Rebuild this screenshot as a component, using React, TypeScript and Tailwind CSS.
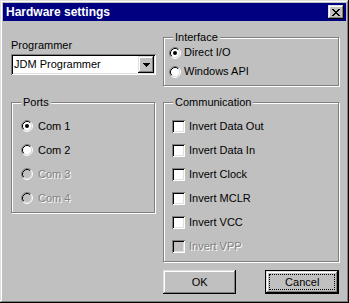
import React from "react";

const raised =
  "shadow-[inset_-1px_-1px_#000,inset_1px_1px_#dfdfdf,inset_-2px_-2px_#808080,inset_2px_2px_#fff]";
const sunken =
  "shadow-[inset_1px_1px_#808080,inset_-1px_-1px_#fff,inset_2px_2px_#000,inset_-2px_-2px_#dfdfdf]";

const Radio = ({ checked, disabled }: { checked?: boolean; disabled?: boolean }) => (
  <svg width="12" height="12" viewBox="0 0 12 12" className="shrink-0">
    <circle cx="6" cy="6" r="4.5" fill={disabled ? "#c0c0c0" : "#fff"} />
    <path d="M2.11 9.89A5.5 5.5 0 0 1 9.89 2.11" fill="none" stroke="#808080" />
    <path d="M9.89 2.11A5.5 5.5 0 0 1 2.11 9.89" fill="none" stroke="#fff" />
    <path d="M2.82 9.18A4.5 4.5 0 0 1 9.18 2.82" fill="none" stroke="#000" />
    <path d="M9.18 2.82A4.5 4.5 0 0 1 2.82 9.18" fill="none" stroke="#dfdfdf" />
    {checked && <circle cx="6" cy="6" r="2" fill={disabled ? "#808080" : "#000"} />}
  </svg>
);

const Check = ({ disabled }: { disabled?: boolean }) => (
  <div className={`w-[13px] h-[13px] shrink-0 ${sunken} ${disabled ? "bg-[#c0c0c0]" : "bg-white"}`} />
);

const Group = ({
  title,
  className,
  children,
}: {
  title: string;
  className: string;
  children: React.ReactNode;
}) => (
  <div
    className={`relative border border-[#808080] shadow-[inset_1px_1px_#fff,1px_1px_#fff] ${className}`}
  >
    <span className="absolute top-[-7px] left-[9px] px-[2px] bg-[#c0c0c0]">{title}</span>
    {children}
  </div>
);

const dim = "text-[#808080] [text-shadow:1px_1px_0_#fff]";

export default function App() {
  return (
    <div
      className={`w-[349px] h-[303px] bg-[#c0c0c0] p-[3px] ${raised} font-['Liberation_Sans',Arial,sans-serif] text-[11px] leading-[13px] text-black`}
    >
      <div className="h-[18px] bg-[#000080] flex items-center justify-between pl-[3px] pr-[2px]">
        <span className="text-white font-bold text-[12px]">Hardware settings</span>
        <div className={`w-[16px] h-[14px] bg-[#c0c0c0] ${raised} flex items-center justify-center`}>
          <svg width="8" height="7" viewBox="0 0 8 7" shapeRendering="crispEdges">
            <path
              d="M0 0h2v1h-2zM6 0h2v1h-2zM1 1h2v1h-2zM5 1h2v1h-2zM2 2h4v1h-4zM3 3h2v1h-2zM2 4h4v1h-4zM1 5h2v1h-2zM5 5h2v1h-2zM0 6h2v1h-2zM6 6h2v1h-2z"
              fill="#000"
            />
          </svg>
        </div>
      </div>

      <div className="pl-[8px] pt-[16px] flex gap-[7px]">
        <div className="w-[145px] flex flex-col">
          <div className="mt-[2px]">Programmer</div>
          <div className={`mt-[2px] h-[21px] bg-white ${sunken} flex items-center pl-[3px] pr-[2px]`}>
            <span>JDM Programmer</span>
            <div className={`ml-auto w-[16px] h-[17px] bg-[#c0c0c0] ${raised} flex items-center justify-center`}>
              <svg width="7" height="4" viewBox="0 0 7 4" shapeRendering="crispEdges">
                <path d="M0 0h7v1h-7zM1 1h5v1h-5zM2 2h3v1h-3zM3 3h1v1h-1z" fill="#000" />
              </svg>
            </div>
          </div>
          <Group title="Ports" className="mt-[27px] h-[111px] w-[144px] pt-[11px] pl-[9px]">
            {[
              { l: "Com 1", c: true },
              { l: "Com 2" },
              { l: "Com 3", d: true },
              { l: "Com 4", d: true },
            ].map((r) => (
              <div key={r.l} className="h-[24px] flex items-center gap-[5px]">
                <Radio checked={r.c} disabled={r.d} />
                <span className={r.d ? dim : ""}>{r.l}</span>
              </div>
            ))}
          </Group>
        </div>

        <div className="w-[176px] flex flex-col">
          <Group title="Interface" className="h-[49px] pt-[5px] pl-[5px]">
            <div className="h-[19px] flex items-center gap-[3px]">
              <Radio checked />
              <span>Direct I/O</span>
            </div>
            <div className="h-[19px] flex items-center gap-[3px]">
              <Radio />
              <span>Windows API</span>
            </div>
          </Group>
          <Group title="Communication" className="mt-[16px] h-[160px] pt-[11px] pl-[8px]">
            {["Invert Data Out", "Invert Data In", "Invert Clock", "Invert MCLR", "Invert VCC", "Invert VPP"].map(
              (l, i) => (
                <div key={l} className="h-[24px] flex items-center gap-[4px]">
                  <Check disabled={i === 5} />
                  <span className={i === 5 ? dim : ""}>{l}</span>
                </div>
              )
            )}
          </Group>
          <div className="mt-[8px] flex gap-[29px]">
            <button className={`w-[75px] h-[24px] bg-[#c0c0c0] ${raised} flex items-center justify-center`}>
              OK
            </button>
            <button className="w-[75px] h-[24px] bg-[#c0c0c0] border border-black p-0">
              <div
                className={`w-full h-full ${raised} p-[3px]`}
              >
                <div className="w-full h-full border border-dotted border-black flex items-center justify-center">
                  Cancel
                </div>
              </div>
            </button>
          </div>
        </div>
      </div>
    </div>
  );
}
